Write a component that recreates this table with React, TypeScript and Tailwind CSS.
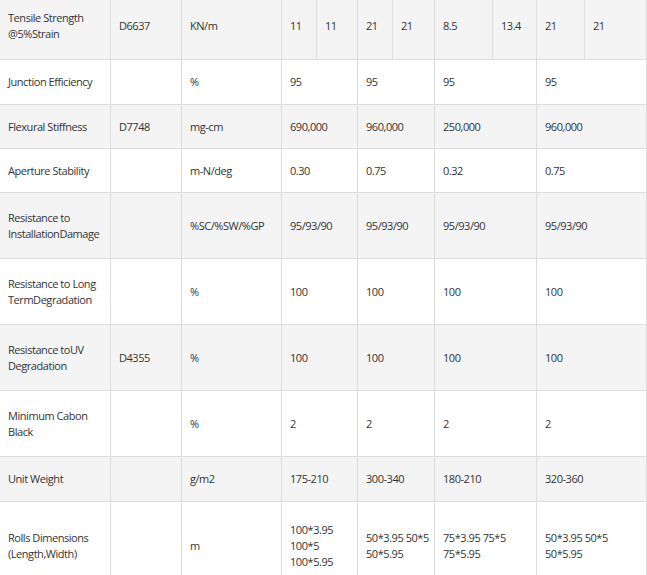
const widths = [111, 71, 100, 35, 41, 35, 42, 58, 44, 48, 62];

type Row = {
  name: React.ReactNode;
  std: string;
  unit: string;
  values: React.ReactNode[];
  split?: boolean;
  h: string;
  shaded: boolean;
};

const rows: Row[] = [
  {
    name: <>Tensile Strength<br />@5%Strain</>,
    std: "D6637",
    unit: "KN/m",
    values: ["11", "11", "21", "21", "8.5", "13.4", "21", "21"],
    split: true,
    h: "h-[67px]",
    shaded: true,
  },
  { name: "Junction Efficiency", std: "", unit: "%", values: ["95", "95", "95", "95"], h: "h-[45px]", shaded: false },
  { name: "Flexural Stiffness", std: "D7748", unit: "mg-cm", values: ["690,000", "960,000", "250,000", "960,000"], h: "h-[44px]", shaded: true },
  { name: "Aperture Stability", std: "", unit: "m-N/deg", values: ["0.30", "0.75", "0.32", "0.75"], h: "h-[44px]", shaded: false },
  {
    name: <>Resistance to<br />InstallationDamage</>,
    std: "",
    unit: "%SC/%SW/%GP",
    values: ["95/93/90", "95/93/90", "95/93/90", "95/93/90"],
    h: "h-[66px]",
    shaded: true,
  },
  {
    name: <>Resistance to Long<br />TermDegradation</>,
    std: "",
    unit: "%",
    values: ["100", "100", "100", "100"],
    h: "h-[66px]",
    shaded: false,
  },
  {
    name: <>Resistance toUV<br />Degradation</>,
    std: "D4355",
    unit: "%",
    values: ["100", "100", "100", "100"],
    h: "h-[66px]",
    shaded: true,
  },
  {
    name: <>Minimum Cabon<br />Black</>,
    std: "",
    unit: "%",
    values: ["2", "2", "2", "2"],
    h: "h-[66px]",
    shaded: false,
  },
  { name: "Unit Weight", std: "", unit: "g/m2", values: ["175-210", "300-340", "180-210", "320-360"], h: "h-[45px]", shaded: true },
  {
    name: <>Rolls Dimensions<br />(Length,Width)</>,
    std: "",
    unit: "m",
    values: [
      <>100*3.95<br />100*5<br />100*5.95</>,
      <>50*3.95 50*5<br />50*5.95</>,
      <>75*3.95 75*5<br />75*5.95</>,
      <>50*3.95 50*5<br />50*5.95</>,
    ],
    h: "h-[88px]",
    shaded: false,
  },
];

const cell = "border border-[#dddddd] px-2 align-middle font-normal whitespace-nowrap";

export default function App() {
  return (
    <div className="w-[647px] h-[575px] overflow-hidden bg-white">
      <table
        className="table-fixed border-collapse w-[648px] -ml-px -mt-[8px] text-[11px] leading-[16px] tracking-[-0.45px] text-[#333333] text-left"
        style={{ fontFamily: '"Open Sans", "Noto Sans", sans-serif' }}
      >
        <colgroup>
          {widths.map((w, i) => (
            <col key={i} style={{ width: w }} />
          ))}
        </colgroup>
        <tbody>
          {rows.map((r, i) => (
            <tr key={i} className={`${r.h} ${r.shaded ? "bg-[#f4f4f4]" : "bg-white"}`}>
              <td className={cell}>{r.name}</td>
              <td className={cell}>{r.std}</td>
              <td className={cell}>{r.unit}</td>
              {r.split
                ? r.values.map((v, j) => (
                    <td key={j} className={cell}>
                      {v}
                    </td>
                  ))
                : r.values.map((v, j) => (
                    <td key={j} colSpan={2} className={cell}>
                      {v}
                    </td>
                  ))}
            </tr>
          ))}
        </tbody>
      </table>
    </div>
  );
}
